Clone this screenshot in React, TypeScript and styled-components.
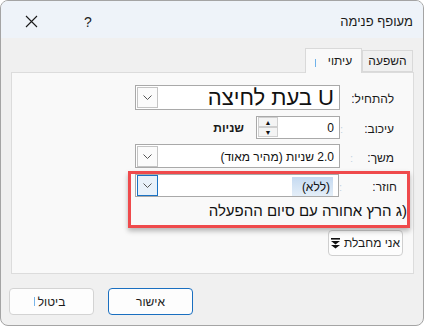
import React from 'react';
import styled, { createGlobalStyle } from 'styled-components';

const Global = createGlobalStyle`
  html, body { margin: 0; padding: 0; background: #ffffff; }
  body { font-family: "Liberation Sans", "DejaVu Sans", sans-serif; }
  * { box-sizing: border-box; }
`;

const Win = styled.div`
  width: 424px;
  height: 326px;
  border: 1px solid #a4a4a4;
  border-radius: 8px;
  overflow: hidden;
  background: #f0f0f0;
  display: flex;
  flex-direction: column;
  direction: rtl;
  color: #1b1b1b;
`;

const TitleBar = styled.div`
  height: 37px;
  flex-shrink: 0;
  background: #eef3f9;
  display: flex;
  align-items: center;
  padding-right: 10px;
`;

const Title = styled.div`
  flex: 1;
  font-size: 13px;
  padding-top: 4px;
`;

const TitleButton = styled.div<{ $w: number; $ml: number }>`
  width: ${(p) => p.$w}px;
  margin-left: ${(p) => p.$ml}px;
  height: 30px;
  display: flex;
  align-items: center;
  justify-content: center;
  font-size: 14px;
  padding-top: 4px;
  color: #222;
`;

const Body = styled.div`
  flex: 1;
  display: flex;
  flex-direction: column;
  padding: 10px 9px 0 10px;
`;

const Tabs = styled.div`
  display: flex;
  align-items: flex-end;
  height: 24px;
  padding-right: 1px;
`;

const Tab = styled.div<{ $active?: boolean; $w: number }>`
  position: relative;
  width: ${(p) => p.$w}px;
  height: ${(p) => (p.$active ? 25 : 22)}px;
  margin-bottom: ${(p) => (p.$active ? -1 : 0)}px;
  z-index: ${(p) => (p.$active ? 1 : 0)};
  background: ${(p) => (p.$active ? '#f9f9f9' : '#f0f0f0')};
  border: 1px solid #d9d9d9;
  border-bottom: ${(p) => (p.$active ? 'none' : '1px solid #d9d9d9')};
  display: flex;
  align-items: center;
  justify-content: center;
  font-size: 12px;
  color: #1a1a1a;
`;

const Caret = styled.span`
  width: 1px;
  height: 8px;
  background: #6fb2ea;
  margin-right: 12px;
  margin-top: 3px;
`;

const Panel = styled.div`
  height: 202px;
  border: 1px solid #dcdcdc;
  background: #f9f9f9;
  padding-top: 12px;
  display: flex;
  flex-direction: column;
`;

const Row = styled.div<{ $h: number; $mb: number }>`
  display: flex;
  align-items: center;
  height: ${(p) => p.$h}px;
  margin-bottom: ${(p) => p.$mb}px;
`;

const LabelCell = styled.div<{ $w: number; $pr: number }>`
  width: ${(p) => p.$w}px;
  padding-right: ${(p) => p.$pr}px;
  flex-shrink: 0;
  font-size: 12px;
  color: #1a1a1a;
  padding-top: 3px;
  display: flex;
  align-items: center;
`;

const Faint = styled.span<{ $ml: number }>`
  color: #c4d4e2;
  font-size: 11px;
  margin-right: auto;
  margin-left: ${(p) => p.$ml}px;
`;

const Field = styled.div<{ $w: number; $h: number; $big?: boolean }>`
  width: ${(p) => p.$w}px;
  height: ${(p) => p.$h}px;
  border: 1px solid #a9a9a9;
  background: #ffffff;
  display: flex;
  align-items: center;
  padding: 0 5px 0 1px;
  font-size: ${(p) => (p.$big ? 22 : 12)}px;
  color: #111;
`;

const FieldText = styled.div`
  flex: 1;
  white-space: nowrap;
  overflow: hidden;
  padding-top: 1px;
  display: flex;
  align-items: center;
`;

const Highlight = styled.span`
  display: inline-block;
  height: 19px;
  line-height: 20px;
  background: linear-gradient(#c5daf1, #e4eef8);
  padding: 0 7px 0 10px;
  margin-right: -4px;
`;

const DropButton = styled.div<{ $focus?: boolean }>`
  width: 21px;
  height: 21px;
  flex-shrink: 0;
  border: 1px solid ${(p) => (p.$focus ? '#1a72c4' : '#c4c4c4')};
  background: ${(p) => (p.$focus ? '#e8f1fa' : '#fbfbfb')};
  display: flex;
  align-items: center;
  justify-content: center;
`;

const Spin = styled.div`
  width: 20px;
  height: 20px;
  display: flex;
  flex-direction: column;
  flex-shrink: 0;
`;

const SpinHalf = styled.div`
  flex: 1;
  border: 1px solid #cfcfcf;
  background: #f4f4f4;
  display: flex;
  align-items: center;
  justify-content: center;
  font-size: 7px;
  color: #111;
  line-height: 1;
`;

const Units = styled.div`
  font-size: 12px;
  font-weight: bold;
  margin-right: 12px;
  padding-top: 2px;
`;

const RedBox = styled.div`
  width: 282px;
  height: 57px;
  margin-right: 3px;
  border: 3px solid #ef4a4c;
  box-shadow: 0 3px 5px rgba(0, 0, 0, 0.28);
  display: flex;
  flex-direction: column;
  position: relative;
  z-index: 1;
`;

const BigLine = styled.div`
  font-size: 15px;
  color: #111;
  white-space: nowrap;
  overflow: hidden;
  margin-top: 5px;
  line-height: 18px;
`;

const ToolButton = styled.div`
  align-self: flex-start;
  margin-right: 10px;
  margin-top: 2px;
  height: 26px;
  width: 75px;
  border: 1px solid #cfcfcf;
  border-radius: 4px;
  background: #fdfdfd;
  display: flex;
  align-items: center;
  justify-content: center;
  gap: 4px;
  font-size: 12px;
`;

const Footer = styled.div`
  display: flex;
  gap: 14px;
  justify-content: flex-end;
  padding: 14px 0 0 0;
  margin-left: -2px;
`;

const Button = styled.div<{ $primary?: boolean }>`
  width: 85px;
  height: 27px;
  border-radius: 4px;
  border: ${(p) => (p.$primary ? '1.5px solid #1a6fc0' : '1px solid #d3d3d3')};
  background: #fdfdfd;
  display: flex;
  align-items: center;
  justify-content: center;
  font-size: 12px;
  position: relative;
`;

const ButtonCaret = styled.span`
  position: absolute;
  left: 24px;
  top: 8px;
  width: 1px;
  height: 9px;
  background: #79b6ea;
`;

const Chevron = () => (
  <svg width="9" height="5" viewBox="0 0 9 5">
    <polyline points="0.5,0.5 4.5,4.5 8.5,0.5" fill="none" stroke="#555" strokeWidth="1" />
  </svg>
);

const CloseIcon = () => (
  <svg width="13" height="13" viewBox="0 0 13 13">
    <path d="M1 1 L12 12 M12 1 L1 12" stroke="#1a1a1a" strokeWidth="1.1" />
  </svg>
);

const CollapseIcon = () => (
  <svg width="9" height="11" viewBox="0 0 9 11">
    <rect x="0" y="0" width="9" height="1.6" fill="#111" />
    <polygon points="0,3 9,3 4.5,6.5" fill="#111" />
    <polygon points="0,7 9,7 4.5,10.5" fill="#111" />
  </svg>
);

export default function App() {
  return (
    <>
      <Global />
      <Win>
        <TitleBar>
          <Title>מעופף פנימה</Title>
          <TitleButton $w={40} $ml={14}>?</TitleButton>
          <TitleButton $w={46} $ml={7}>
            <CloseIcon />
          </TitleButton>
        </TitleBar>
        <Body>
          <Tabs>
            <Tab $w={51}>השפעה</Tab>
            <Tab $w={57} $active>
              עיתוי
              <Caret />
            </Tab>
          </Tabs>
          <Panel>
            <Row $h={25} $mb={6}>
              <LabelCell $w={73} $pr={19}>להתחיל:</LabelCell>
              <Field $w={205} $h={25} $big>
                <FieldText>U בעת לחיצה</FieldText>
                <DropButton>
                  <Chevron />
                </DropButton>
              </Field>
            </Row>
            <Row $h={22} $mb={6}>
              <LabelCell $w={73} $pr={19}>
                עיכוב:
                <Faint $ml={0}>:</Faint>
              </LabelCell>
              <Field $w={84} $h={23}>
                <FieldText>0</FieldText>
                <Spin>
                  <SpinHalf>▲</SpinHalf>
                  <SpinHalf>▼</SpinHalf>
                </Spin>
              </Field>
              <Units>שניות</Units>
            </Row>
            <Row $h={24} $mb={3}>
              <LabelCell $w={73} $pr={19}>
                משך:
                <Faint $ml={10}>:</Faint>
              </LabelCell>
              <Field $w={205} $h={24}>
                <FieldText>2.0 שניות (מהיר מאוד)</FieldText>
                <DropButton>
                  <Chevron />
                </DropButton>
              </Field>
            </Row>
            <RedBox>
              <Row $h={23} $mb={0}>
                <LabelCell $w={68} $pr={10}>
                  חוזר:
                  <Faint $ml={0}>:</Faint>
                </LabelCell>
                <Field $w={204} $h={23}>
                  <FieldText>
                    <Highlight>(ללא)</Highlight>
                  </FieldText>
                  <DropButton $focus>
                    <Chevron />
                  </DropButton>
                </Field>
              </Row>
              <BigLine>(ג הרץ אחורה עם סיום ההפעלה</BigLine>
            </RedBox>
            <ToolButton>
              אני מחבלת
              <CollapseIcon />
            </ToolButton>
          </Panel>
          <Footer>
            <Button $primary>אישור</Button>
            <Button>
              ביטול
              <ButtonCaret />
            </Button>
          </Footer>
        </Body>
      </Win>
    </>
  );
}
